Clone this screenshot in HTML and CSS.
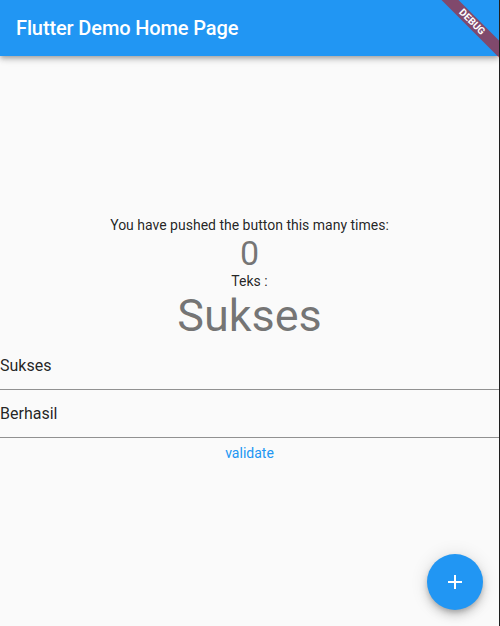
FILE: index.html
```html
<!DOCTYPE html>
<html>
<head>
<meta charset="utf-8">
<link rel="stylesheet" href="styles.css">
</head>
<body>
<div class="app">
  <header class="appbar">
    <h1 class="title">Flutter Demo Home Page</h1>
  </header>
  <main class="body">
    <div class="column">
      <div class="caption">You have pushed the button this many times:</div>
      <div class="counter">0</div>
      <div class="caption">Teks :</div>
      <div class="big">Sukses</div>
      <div class="field"><span>Sukses</span></div>
      <div class="field"><span>Berhasil</span></div>
      <button class="flat">validate</button>
    </div>
  </main>
  <button class="fab" aria-label="Increment">
    <svg width="24" height="24" viewBox="0 0 24 24"><path d="M19 13h-6v6h-2v-6H5v-2h6V5h2v6h6v2z" fill="#fff"/></svg>
  </button>
  <div class="banner"><span>DEBUG</span></div>
</div>
</body>
</html>
```
FILE: styles.css
```css
* { box-sizing: border-box; }
html, body { margin: 0; padding: 0; }
body {
  font-family: Roboto, "Noto Sans", sans-serif;
  background: #1e1e1e;
  width: 500px;
  height: 626px;
  overflow: hidden;
}
.app {
  position: relative;
  width: 499px;
  height: 626px;
  display: flex;
  flex-direction: column;
  background: #fafafa;
  overflow: hidden;
}
.appbar {
  height: 56px;
  flex: none;
  background: #2196f3;
  display: flex;
  align-items: center;
  padding-left: 16px;
  box-shadow: 0 2px 4px -1px rgba(0,0,0,0.2), 0 4px 5px 0 rgba(0,0,0,0.14), 0 1px 10px 0 rgba(0,0,0,0.12);
  position: relative;
  z-index: 1;
}
.title {
  margin: 0;
  font-size: 20px;
  font-weight: 500;
  color: #fff;
  letter-spacing: -0.12px;
}
.body {
  flex: 1;
  display: flex;
  flex-direction: column;
  justify-content: center;
}
.column {
  display: flex;
  flex-direction: column;
  align-items: center;
  margin-top: 2px;
}
.caption {
  font-size: 14px;
  line-height: 16px;
  color: rgba(0,0,0,0.87);
}
.counter {
  font-size: 34px;
  line-height: 40px;
  color: rgba(0,0,0,0.54);
}
.big {
  font-size: 45px;
  line-height: 53px;
  color: rgba(0,0,0,0.54);
}
.field {
  align-self: stretch;
  height: 48px;
  border-bottom: 1px solid rgba(0,0,0,0.42);
  display: flex;
  align-items: center;
  font-size: 16px;
  color: rgba(0,0,0,0.87);
}
.flat {
  border: none;
  background: transparent;
  font-family: inherit;
  font-size: 14px;
  color: #2196f3;
  height: 30px;
  padding: 0 16px;
  cursor: pointer;
}
.fab {
  position: absolute;
  right: 16px;
  bottom: 16px;
  width: 56px;
  height: 56px;
  border-radius: 50%;
  border: none;
  background: #2196f3;
  display: flex;
  align-items: center;
  justify-content: center;
  padding: 0;
  box-shadow: 0 3px 5px -1px rgba(0,0,0,0.2), 0 6px 10px 0 rgba(0,0,0,0.14), 0 1px 18px 0 rgba(0,0,0,0.12);
}
.banner {
  position: absolute;
  top: 0;
  right: 0;
  width: 80px;
  height: 80px;
  overflow: hidden;
  z-index: 2;
  pointer-events: none;
}
.banner span {
  position: absolute;
  top: 16px;
  right: -33px;
  width: 120px;
  height: 12px;
  line-height: 12px;
  background: rgba(183,28,28,0.63);
  color: #fff;
  font-size: 10px;
  font-weight: 700;
  text-align: center;
  transform: rotate(45deg);
  letter-spacing: 0;
}
```
